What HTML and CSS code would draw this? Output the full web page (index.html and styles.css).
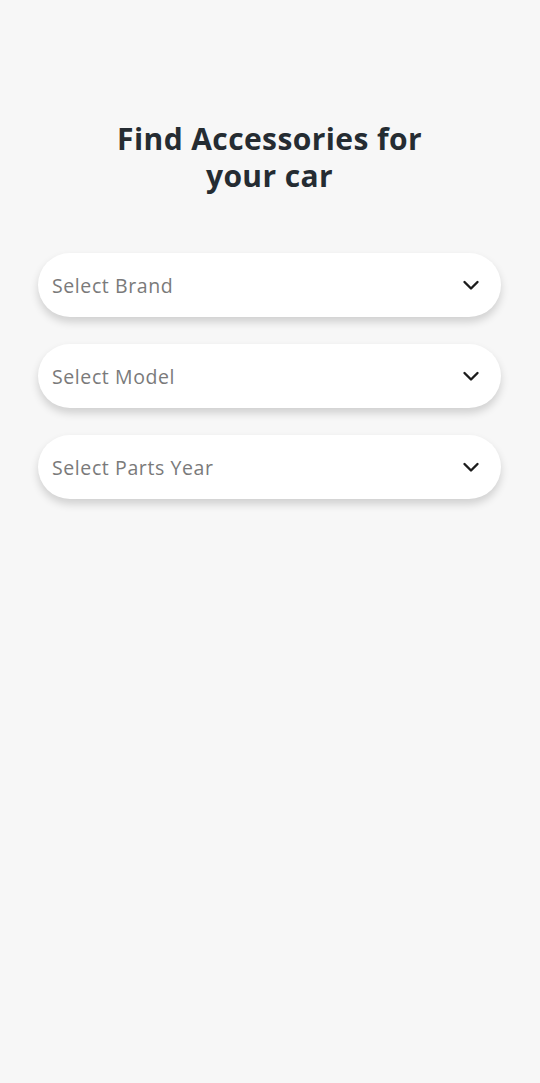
FILE: index.html
```html
<!DOCTYPE html>
<html>
<head>
<meta charset="utf-8">
<link rel="stylesheet" href="styles.css">
</head>
<body>
<main class="page">
  <h1 class="title">Find Accessories for<br>your car</h1>
  <div class="selects">
    <div class="select"><span class="label">Select Brand</span>
      <svg class="chev" viewBox="0 0 18 12" width="18" height="12"><path d="M2.5 3l6.5 6.5 6.5-6.5" fill="none" stroke="#1c1c1c" stroke-width="2.4" stroke-linecap="round" stroke-linejoin="round"/></svg>
    </div>
    <div class="select"><span class="label">Select Model</span>
      <svg class="chev" viewBox="0 0 18 12" width="18" height="12"><path d="M2.5 3l6.5 6.5 6.5-6.5" fill="none" stroke="#1c1c1c" stroke-width="2.4" stroke-linecap="round" stroke-linejoin="round"/></svg>
    </div>
    <div class="select"><span class="label">Select Parts Year</span>
      <svg class="chev" viewBox="0 0 18 12" width="18" height="12"><path d="M2.5 3l6.5 6.5 6.5-6.5" fill="none" stroke="#1c1c1c" stroke-width="2.4" stroke-linecap="round" stroke-linejoin="round"/></svg>
    </div>
  </div>
</main>
</body>
</html>
```
FILE: styles.css
```css
html, body {
  margin: 0;
  padding: 0;
  background: #f7f7f7;
  height: 100%;
}
body {
  font-family: "Open Sans", "Noto Sans", sans-serif;
}
.page {
  padding: 120px 39px 0 38px;
}
.title {
  margin: 0;
  text-align: center;
  font-family: "Open Sans", sans-serif;
  font-weight: 700;
  font-size: 30px;
  line-height: 37px;
  color: #252c32;
  letter-spacing: 0.4px;
}
.selects {
  margin-top: 59px;
  display: flex;
  flex-direction: column;
  gap: 27px;
}
.select {
  height: 64px;
  border-radius: 32px;
  background: #fff;
  box-shadow: 0 5px 9px rgba(0,0,0,0.16);
  display: flex;
  align-items: center;
  justify-content: space-between;
  padding: 0 21px 0 14px;
}
.label {
  font-size: 19.5px;
  color: #7a7a7a;
  letter-spacing: 0.6px;
}
.chev {
  display: block;
}
```
